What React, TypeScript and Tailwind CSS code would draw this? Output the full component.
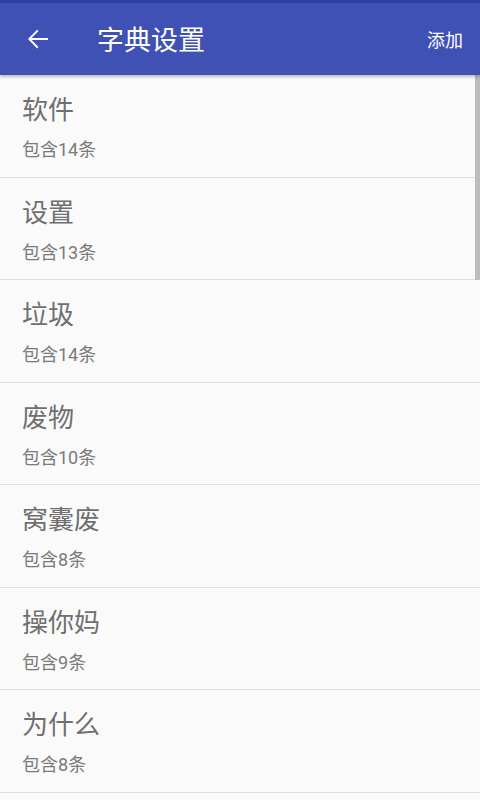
const items = [
  { name: "软件", count: 14 },
  { name: "设置", count: 13 },
  { name: "垃圾", count: 14 },
  { name: "废物", count: 10 },
  { name: "窝囊废", count: 8 },
  { name: "操你妈", count: 9 },
  { name: "为什么", count: 8 },
];

function BackArrow() {
  return (
    <svg viewBox="0 0 24 24" className="ml-[23px] h-[30px] w-[30px] fill-white">
      <path d="M20 11.2H6.9l5.5-5.6-1.1-1.1L4 12l7.3 7.5 1.1-1.1-5.5-5.6H20v-1.6z" />
    </svg>
  );
}

export default function App() {
  return (
    <div
      className="relative h-[800px] w-[480px] overflow-hidden bg-[#fafafa]"
      style={{ fontFamily: 'Roboto, "Noto Sans CJK SC", "Noto Sans", sans-serif' }}
    >
      {/* 状态栏 + 标题栏 */}
      <div className="h-[3px] bg-[#303f9f]" />
      <header className="relative z-10 flex h-[72px] items-center bg-[#3f51b5] shadow-[0_2px_3px_rgba(0,0,0,0.25)]">
        <BackArrow />
        <h1 className="ml-[44px] mt-[4px] flex-1 text-[27px] leading-none text-white">字典设置</h1>
        <button className="mr-[17px] mt-[4px] text-[18px] leading-none text-white">添加</button>
      </header>

      {/* 列表 */}
      <div className="flex flex-col">
        {items.map((item) => (
          <div
            key={item.name}
            className="flex h-[102.5px] shrink-0 flex-col border-b-[1.5px] border-[#e0e0e0] pl-[22px]"
          >
            <div className="mt-[19px] text-[26px] leading-[32px] text-[#6f6f6f]">{item.name}</div>
            <div className="mt-[13px] text-[18px] leading-[22px] text-[#7a7a7a]">包含{item.count}条</div>
          </div>
        ))}
      </div>

      {/* 滚动条 */}
      <div className="absolute right-0 top-[75px] h-[205px] w-[5px] bg-[#bdbdbd]" />
    </div>
  );
}
